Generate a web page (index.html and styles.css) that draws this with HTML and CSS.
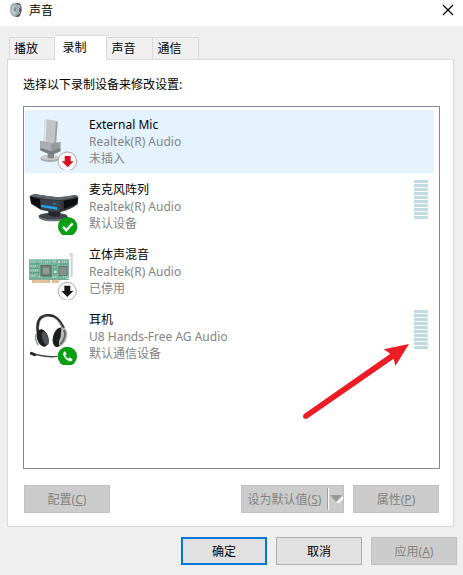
FILE: index.html
```html
<!DOCTYPE html>
<html lang="zh-CN">
<head>
	<meta charset="UTF-8">
	<meta name="viewport" content="width=device-width,initial-scale=1.0">
	<title>声音</title>
	<link rel="stylesheet" href="styles.css">
</head>
<body>
	<div class="window">
		<div class="title-bar">
			<svg class="title-icon" viewBox="0 0 42 48">
				<path d="M18 3 L30 3 Q39 10 38 24 Q37 38 28 45 L17 44 Z" fill="#4b5054"/>
				<path d="M27 5 L34 12 L35 20 L28 17 Z M29 29 L35 30 L28 40 Z" fill="#b9bdc0"/>
				<ellipse cx="16" cy="23" rx="13" ry="20" fill="#9ba7ae" stroke="#c9cdd0" stroke-width="3" stroke-dasharray="8 3"/>
				<ellipse cx="15" cy="24" rx="8" ry="14" fill="#b9cbd5"/>
				<ellipse cx="18" cy="22" rx="4" ry="7" fill="#7e909b"/>
			</svg>
			<span class="title-text">声音</span>
			<button class="close" type="button" aria-label="关闭">
				<svg viewBox="0 0 12 12"><path d="M1 1 L11 11 M11 1 L1 11" stroke="#000" stroke-width="1.2"/></svg>
			</button>
		</div>
		<div class="content">
			<div class="tabs" role="tablist">
				<button class="tab" type="button" role="tab">播放</button>
				<button class="tab active" type="button" role="tab" aria-selected="true">录制</button>
				<button class="tab" type="button" role="tab">声音</button>
				<button class="tab" type="button" role="tab">通信</button>
			</div>
			<div class="panel" role="tabpanel">
				<div class="discription" id="discription">选择以下录制设备来修改设置:</div>
				<div class="device-box">
					<ul class="device-list" role="listbox" aria-labelledby="discription">
						<li class="item selected" role="option" aria-selected="true">
							<svg class="device-icon" viewBox="24 21 162 174">
								<ellipse cx="90" cy="161" rx="29" ry="10" fill="#a9abad"/>
								<ellipse cx="90" cy="157" rx="28" ry="8" fill="#c9cbcc"/>
								<path d="M83 140 H102 V158 Q92 163 83 158 Z" fill="#85888b"/>
								<path d="M77 43 L108 47 Q113 48 113 53 L108 118 L71 112 L73 48 Z" fill="#c1c4c7"/>
								<path d="M77 43 L73 48 L71 112 L77 113 L80 48 Z" fill="#dfe1e3"/>
								<path d="M108 47 L113 52 L108 118 L103 117 Z" fill="#9da1a5"/>
								<path d="M60 107 L94 115 L122 111 L121 139 L94 150 L61 136 Z" fill="#94989c"/>
								<path d="M60 107 L94 115 L94 150 L61 136 Z" fill="#a9adb0"/>
								<path d="M61 128 L94 139 L121 130 L121 139 L94 150 L61 136 Z" fill="#777c80"/>
								<circle cx="142" cy="169" r="28" fill="#fff" stroke="#ada5a5" stroke-width="3"/>
								<path d="M134 153 H152 V169 H161 L143 187 L125 169 H134 Z" fill="#d9101d"/>
							</svg>
							<div class="device-text">
								<div class="name">External Mic</div>
								<div>Realtek(R) Audio</div>
								<div>未插入</div>
							</div>
						</li>
						<li class="item" role="option">
							<svg class="device-icon" viewBox="24 15 162 174">
								<ellipse cx="100" cy="136" rx="44" ry="12" fill="#6b7278"/>
								<ellipse cx="99" cy="132" rx="43" ry="10" fill="#40464c"/>
								<path d="M84 112 H124 L119 132 Q102 138 86 130 Z" fill="#24282c"/>
								<path d="M29 72 L43 66 Q76 72 112 76 Q142 75 165 69 Q174 70 175 78 L173 96 Q156 112 118 121 Q90 121 62 113 L33 95 Z" fill="#33383d"/>
								<path d="M43 66 Q76 72 112 76 Q142 75 165 69 L172 74 Q146 82 119 84 Q76 82 30 72 Z" fill="#60686f"/>
								<path d="M31 74 L60 81 L62 111 L34 94 Z M131 86 L173 78 L172 95 L132 111 Z" fill="#0c0e10"/>
								<path d="M62 82 Q91 87 120 87 V118 Q90 118 63 110 Z" fill="#3c444b"/>
								<path d="M63 98 L112 106 V113 L63 105 Z" fill="#20a7f2"/>
								<path d="M100 93 L107 94 V98 L100 97 Z" fill="#198bd0"/>
								<circle cx="143" cy="164" r="29" fill="#079314"/>
								<circle cx="143" cy="164" r="26" fill="#08a013"/>
								<path d="M129 164 L139 175 L158 154" fill="none" stroke="#fff" stroke-width="7"/>
							</svg>
							<div class="device-text">
								<div class="name">麦克风阵列</div>
								<div>Realtek(R) Audio</div>
								<div>默认设备</div>
							</div>
							<div class="meter"></div>
						</li>
						<li class="item" role="option">
							<svg class="device-icon" viewBox="24 6 162 174">
								<path d="M147 41 L158 39 V111 H152 V45 L147 46 Z" fill="#cfd1d1"/>
								<path d="M27 58 L147 58 V114 L134 117 H38 L27 119 Z" fill="#78b59d"/>
								<path d="M36 119 H90 V129 H36 Z M96 119 H116 V129 H96 Z" fill="#dfb48d"/>
								<path d="M28 118 H147" stroke="#5d9b83" stroke-width="3"/>
								<path d="M42 119 V129 M48 119 V129 M54 119 V129 M60 119 V129 M66 119 V129 M72 119 V129 M78 119 V129 M84 119 V129 M102 119 V129 M108 119 V129" stroke="#f3dbc4" stroke-width="2"/>
								<path d="M32 65 H50 M56 65 H67 M75 66 H91 M98 64 H109 M126 66 H143 M32 78 H48 M32 91 H55 M31 107 H48 M56 110 H68 M98 111 H112 M129 110 H144" stroke="#c7e0d4" stroke-width="5" stroke-dasharray="3 3"/>
								<path d="M32 72 H58 M31 85 H56 M31 98 H57 M99 76 H110 M99 87 H112 M99 101 H109 M121 72 H145" stroke="#4e8f77" stroke-width="3" stroke-dasharray="5 2"/>
								<rect x="63" y="77" width="30" height="31" fill="#737f7a" stroke="#596960" stroke-width="3"/>
								<rect x="69" y="83" width="18" height="19" fill="#929b97"/>
								<rect x="117" y="80" width="24" height="27" fill="#89918e" stroke="#60736a" stroke-width="3"/>
								<circle cx="117" cy="66" r="5" fill="#dbe4df" stroke="#6a8b7d" stroke-width="2"/>
								<circle cx="106" cy="96" r="4" fill="#d6e4dd"/>
								<circle cx="142" cy="154" r="27" fill="#fff" stroke="#aaa" stroke-width="3"/>
								<path d="M133 137 H151 V153 H160 L142 171 L124 153 H133 Z" fill="#171717"/>
							</svg>
							<div class="device-text">
								<div class="name">立体声混音</div>
								<div>Realtek(R) Audio</div>
								<div>已停用</div>
							</div>
						</li>
						<li class="item" role="option">
							<svg class="device-icon" viewBox="24 6 162 174">
								<path d="M54 85 Q46 35 80 31 Q112 27 131 70" fill="none" stroke="#292a2c" stroke-width="8"/>
								<path d="M57 65 Q57 35 83 32" fill="none" stroke="#77797b" stroke-width="2"/>
								<path d="M99 36 Q120 47 128 68" fill="none" stroke="#a7a9aa" stroke-width="2"/>
								<ellipse cx="68" cy="99" rx="17" ry="27" transform="rotate(-18 68 99)" fill="#1f2022"/>
								<ellipse cx="76" cy="100" rx="9" ry="21" transform="rotate(-18 76 100)" fill="#515356"/>
								<path d="M50 83 Q42 104 55 120" fill="none" stroke="#8e9093" stroke-width="4"/>
								<ellipse cx="117" cy="97" rx="18" ry="30" transform="rotate(16 117 97)" fill="#1d1e20"/>
								<path d="M124 67 Q143 67 142 91 Q140 116 119 124 Q113 112 122 96 Z" fill="#b8babc"/>
								<path d="M131 75 Q140 84 130 106 L121 118" fill="none" stroke="#66696c" stroke-width="6"/>
								<path d="M31 145 Q43 149 55 150 Q85 158 112 154" fill="none" stroke="#414345" stroke-width="4"/>
								<path d="M34 145 L44 149" stroke="#28292b" stroke-width="9" stroke-linecap="round"/>
								<circle cx="142" cy="154" r="29" fill="#079314"/>
								<circle cx="142" cy="154" r="26" fill="#08a013"/>
								<path d="M132 140 Q127 145 131 153 Q136 164 148 169 Q155 170 158 164 L150 157 L144 161 Q138 157 136 151 L140 147 L135 139 Z" fill="#fff"/>
							</svg>
							<div class="device-text">
								<div class="name">耳机</div>
								<div>U8 Hands-Free AG Audio</div>
								<div>默认通信设备</div>
							</div>
							<div class="meter"></div>
						</li>
					</ul>
					<svg class="arrow" viewBox="36 549 324 234">
						<path d="M42 762 L301 581 L281 568 L357 552 L316 618 L311 596 L53 775 Q45 779 40 773 Q37 767 42 762 Z" fill="#ee1c25"/>
					</svg>
				</div>
				<div class="panel-btns">
					<button class="btn" type="button" disabled>配置(<u>C</u>)</button>
					<div class="split">
						<button class="split-main" type="button" disabled>设为默认值(<u>S</u>)</button>
						<button class="split-drop" type="button" aria-label="更多默认值选项" disabled>
							<svg viewBox="0 0 13 8"><path d="M6 8 L13 1 V4 L9 8 Z" fill="#fff"/><path d="M0 0 H12 L6 7 Z" fill="#999"/></svg>
						</button>
					</div>
					<button class="btn" type="button" disabled>属性(<u>P</u>)</button>
				</div>
			</div>
			<div class="dialog-btns">
				<button class="btn default" type="button">确定</button>
				<button class="btn" type="button">取消</button>
				<button class="btn" type="button" disabled>应用(<u>A</u>)</button>
			</div>
		</div>
	</div>
</body>
</html>
```
FILE: styles.css
```css
		* {
			box-sizing: border-box;
		}
		body {
			margin: 0;
			background-color: #efefef;
			font-family: "Noto Sans", "Noto Sans CJK SC", sans-serif;
			font-size: 12px;
			line-height: 17px;
			color: #000;
		}
		button {
			margin: 0;
			padding: 0;
			font: inherit;
			color: inherit;
		}
		svg {
			display: block;
		}
		.title-bar {
			display: flex;
			align-items: center;
			height: 26px;
			padding: 0 9px 6px;
			background: #fff;
		}
		.title-icon {
			width: 14px;
			height: 16px;
		}
		.title-text {
			flex: 1;
			margin-left: 6px;
		}
		.close {
			border: 0;
			background: none;
		}
		.close svg {
			width: 12px;
			height: 12px;
		}
		.content {
			padding: 9px 6px 10px 7px;
		}
		.tabs {
			display: flex;
			align-items: flex-end;
			padding-left: 2px;
		}
		.tab {
			width: 46px;
			height: 22px;
			padding-right: 12px;
			border: 1px solid #d9d9d9;
			border-left: 0;
			border-bottom: 0;
			background: #f0f0f0;
		}
		.tab:first-child {
			border-left: 1px solid #d9d9d9;
		}
		/* covers the top border of the panel */
		.tab.active {
			width: 52px;
			height: 25px;
			margin-bottom: -1px;
			padding-bottom: 2px;
			background: #fff;
			z-index: 1;
		}
		.panel {
			padding: 16px 13px 13px 15px;
			margin-right: 3px;
			border: 1px solid #d9d9d9;
			background: #fff;
		}
		.device-box {
			position: relative;
			min-height: 363px;
			margin-top: 13px;
			border: 1px solid #828790;
		}
		.device-list {
			list-style: none;
			margin: 0;
			padding: 3px 5px 0 1px;
		}
		.item {
			display: flex;
			height: 63px;
			margin-bottom: 2px;
			padding: 2px 6px 0 3px;
			color: #838383;
		}
		.item.selected {
			background: #e5f3ff;
		}
		.device-icon {
			width: 54px;
			height: 58px;
		}
		.device-text {
			flex: 1;
			padding: 4px 0 0 7px;
		}
		.name {
			color: #000;
		}
		.meter {
			width: 14px;
			height: 39px;
			margin-top: 3px;
			background: repeating-linear-gradient(#c0dce2 0, #c0dce2 3px, #fff 3px, #fff 4px);
		}
		.arrow {
			position: absolute;
			top: 236px;
			right: 29px;
			width: 108px;
			height: 78px;
		}
		.panel-btns {
			display: flex;
			gap: 9px;
			margin: 16px 1px 0;
		}
		.btn {
			width: 86px;
			height: 28px;
			border: 1px solid #adadad;
			background: #e1e1e1;
		}
		.btn:disabled,
		.split {
			border: 1px solid #bfbfbf;
			background: #ccc;
			color: #838383;
		}
		.btn.default {
			border: 2px solid #0078d7;
		}
		.split {
			display: flex;
			align-items: center;
			width: 103px;
			height: 28px;
			margin-left: auto;
		}
		.split button {
			border: 0;
			background: none;
			color: #838383;
		}
		.split .split-main {
			flex: 1;
		}
		.split .split-drop {
			width: 16px;
			height: 22px;
			border-left: 1px solid #a0a0a0;
			box-shadow: inset 1px 0 #fff;
		}
		.split-drop svg {
			width: 13px;
			height: 8px;
			margin-left: 2px;
		}
		.dialog-btns {
			display: flex;
			justify-content: flex-end;
			gap: 9px;
			margin-top: 10px;
		}
```
